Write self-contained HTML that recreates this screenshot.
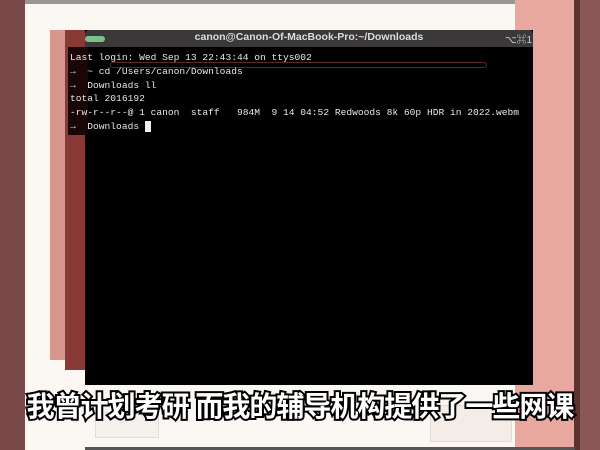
<!DOCTYPE html>
<html><head><meta charset="utf-8"><style>
*{margin:0;padding:0}
body{width:600px;height:450px;position:relative;overflow:hidden;background:#fbf8f4;font-family:"Liberation Sans","Noto Sans CJK SC",sans-serif}
.a{position:absolute}
.t{font-family:"Liberation Mono",monospace;font-size:9.6px;color:#e8e8e8;white-space:pre;position:absolute;left:70px;line-height:13.5px}
</style></head><body>
<div class="a" style="left:0;top:0;width:25px;height:450px;background:#7a4a4a"></div>
<div class="a" style="left:25px;top:0;width:560px;height:4px;background:#9a9696"></div>
<div class="a" style="left:50px;top:30px;width:18px;height:330px;background:#d8968e"></div>
<div class="a" style="left:65px;top:30px;width:20px;height:340px;background:#8a3a36"></div>
<div class="a" style="left:515px;top:0;width:60px;height:450px;background:#e8a8a0"></div>
<div class="a" style="left:574px;top:0;width:6px;height:450px;background:#5e3030"></div>
<div class="a" style="left:580px;top:0;width:20px;height:450px;background:#8a5656"></div>
<div class="a" style="left:515px;top:30px;width:18px;height:260px;background:#7a3a34"></div>
<div class="a" style="left:85px;top:30px;width:448px;height:355px;background:#000"></div>
<div class="a" style="left:68px;top:47px;width:20px;height:88px;background:#1a0606"></div>
<div class="a" style="left:85px;top:30px;width:448px;height:17px;background:#3a3838;border-radius:4px 4px 0 0"></div>
<div class="a" style="left:85px;top:36px;width:20px;height:6px;background:#7fc08a;border-radius:3px"></div>
<div class="a" style="left:85px;top:31px;width:448px;text-align:center;font-size:10.5px;font-weight:bold;color:#ddd">canon@Canon-Of-MacBook-Pro:~/Downloads</div>
<div class="a" style="left:505px;top:31px;font-size:10px;color:#ccc">⌥⌘1</div>
<div class="a" style="left:110px;top:62px;width:375px;height:4px;border:1px solid #5a2a24;border-radius:3px"></div>
<div class="t" style="top:51px">Last login: Wed Sep 13 22:43:44 on ttys002</div>
<div class="t" style="top:65px">→  ~ cd /Users/canon/Downloads</div>
<div class="t" style="top:79px">→  Downloads ll</div>
<div class="t" style="top:92px">total 2016192</div>
<div class="t" style="top:106px">-rw-r--r--@ 1 canon  staff   984M  9 14 04:52 Redwoods 8k 60p HDR in 2022.webm</div>
<div class="t" style="top:120px">→  Downloads <span style="background:#eee">&nbsp;</span></div>
<div class="a" style="left:95px;top:412px;width:62px;height:24px;border:1px solid #ddd;background:#f4f0ec"></div>
<div class="a" style="left:430px;top:405px;width:80px;height:35px;border:1px solid #ddd;background:#f4ece6"></div>
<div class="a" style="left:0;top:385px;width:600px;text-align:center;white-space:nowrap;font-size:28px;font-weight:bold;color:#fff;-webkit-text-stroke:4px #000;paint-order:stroke fill;letter-spacing:-1px">我曾计划考研 而我的辅导机构提供了一些网课</div>
<div class="a" style="left:85px;top:447px;width:490px;height:3px;background:#555"></div>
</body></html>
